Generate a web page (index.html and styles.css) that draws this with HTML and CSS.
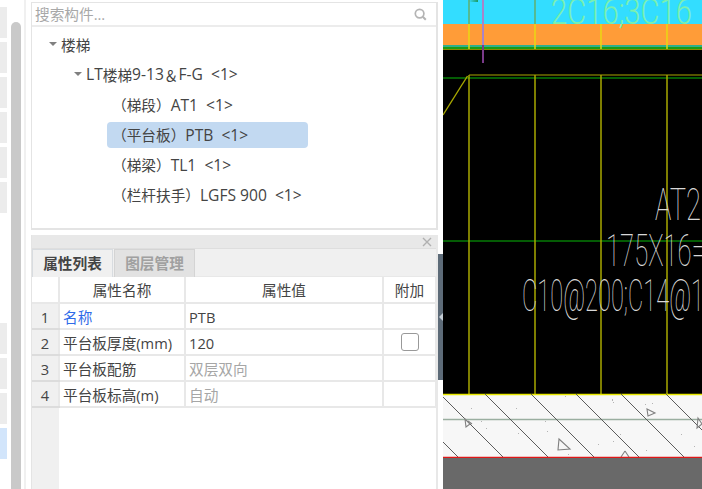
FILE: index.html
```html
<!DOCTYPE html>
<html lang="zh">
<head>
<meta charset="utf-8">
<title>楼梯</title>
<link rel="stylesheet" href="styles.css">
</head>
<body>
<div class="app">
  <aside class="rail">
    <div class="rail-items">
      <div class="rail-group">
        <i></i><i></i><i></i><i></i><i></i><i></i>
      </div>
      <div class="rail-group rail-group-low">
        <i></i><i></i><i></i><i class="on"></i>
      </div>
    </div>
    <div class="rail-scroll"></div>
    <div class="rail-line"></div>
  </aside>

  <main class="side">
    <section class="tree-panel">
      <div class="search">
        <span class="search-text">搜索构件...</span>
        <svg class="search-icon" width="13" height="13" viewBox="0 0 13 13"><circle cx="5.6" cy="5.6" r="4.3" fill="none" stroke="#b4b4b4" stroke-width="1.7"/><path d="M8.8 8.8 11.8 11.8" stroke="#b4b4b4" stroke-width="2"/></svg>
      </div>
      <ul class="tree">
        <li class="node lv0"><span class="caret"></span>楼梯</li>
        <li class="node lv1"><span class="caret"></span><span class="lat">LT</span>楼梯<span class="lat">9-13</span>＆<span class="lat">F-G  &lt;1&gt;</span></li>
        <li class="node lv2"><span class="pill">（梯段）<span class="lat">AT1  &lt;1&gt;</span></span></li>
        <li class="node lv2"><span class="pill selected">（平台板）<span class="lat">PTB  &lt;1&gt;</span></span></li>
        <li class="node lv2"><span class="pill">（梯梁）<span class="lat">TL1  &lt;1&gt;</span></span></li>
        <li class="node lv2"><span class="pill">（栏杆扶手）<span class="lat">LGFS 900  &lt;1&gt;</span></span></li>
      </ul>
    </section>

    <section class="prop-panel">
      <div class="title-bar">
        <svg width="10" height="10" viewBox="0 0 10 10"><path d="M1 1 9 9M9 1 1 9" stroke="#b0b0b0" stroke-width="1.4"/></svg>
      </div>
      <div class="tabs">
        <div class="tab active">属性列表</div>
        <div class="tab">图层管理</div>
      </div>
      <table class="props">
        <colgroup><col class="c-n"><col class="c-name"><col class="c-val"><col class="c-add"></colgroup>
        <thead>
          <tr><th></th><th>属性名称</th><th>属性值</th><th>附加</th></tr>
        </thead>
        <tbody>
          <tr><td class="num">1</td><td class="link">名称</td><td>PTB</td><td></td></tr>
          <tr><td class="num">2</td><td>平台板厚度(mm)</td><td>120</td><td class="chk"><span class="box"></span></td></tr>
          <tr><td class="num">3</td><td>平台板配筋</td><td class="muted">双层双向</td><td></td></tr>
          <tr><td class="num">4</td><td>平台板标高(m)</td><td class="muted">自动</td><td></td></tr>
        </tbody>
      </table>
      <div class="gutter-fill"></div>
    </section>
  </main>

  <div class="splitter"><div class="handle"><span class="arrow"></span></div></div>

  <div class="cad">
    <svg width="259" height="489" viewBox="443 0 259 489">
      <rect x="443" y="0" width="259" height="489" fill="#000"/>
      <rect x="443" y="0" width="259" height="24" fill="#33ddff"/>
      <rect x="443" y="24" width="259" height="21" fill="#ff9c38"/>
      <rect x="443" y="45" width="259" height="2" fill="#2fb08c"/>
      <rect x="443" y="47" width="259" height="2" fill="#1d9a12"/>
      <rect x="443" y="49" width="259" height="1" fill="#8a8a00"/>
      <text class="cad-text top" x="551" y="24" textLength="141" lengthAdjust="spacingAndGlyphs">2C16;3C16</text>
      <g stroke="#e8dc10" stroke-width="1.4">
        <path d="M469 24V49M535 24V49M601 24V49M667 24V49"/>
      </g>
      <g stroke="#6fa040" stroke-width="1.4" opacity=".8">
        <path d="M469 0V24M535 0V24"/>
      </g>
      <path d="M469 1 478 0V2Z" fill="#1f9a60"/>
      <path d="M483 0V45" stroke="#a884c8" stroke-width="2"/>
      <path d="M483 45V63" stroke="#7a3a8a" stroke-width="2"/>

      <path d="M443 78H702M443 241H702" stroke="#08b808" stroke-width="1.2"/>
      <path d="M469 75H702" stroke="#a8a800" stroke-width="1.2"/>
      <path d="M443 115 467.500 76" stroke="#a8a800" stroke-width="1.4"/>
      <path d="M469 75V394M535 75V394M601 75V394M667 75V394" stroke="#a8a800" stroke-width="1.5"/>

      <text class="cad-text" x="655" y="220" textLength="46" lengthAdjust="spacingAndGlyphs">AT2</text>
      <text class="cad-text" x="606" y="266" textLength="100" lengthAdjust="spacingAndGlyphs">175X16=</text>
      <text class="cad-text" x="522" y="311" textLength="182" lengthAdjust="spacingAndGlyphs">C10@200;C14@1</text>

      <rect x="443" y="394" width="259" height="63" fill="#f7f7f7"/>
      <path d="M443 394.500H702" stroke="#e8e800" stroke-width="1.4"/>
      <path d="M443 419.500H702" stroke="#9aaea0" stroke-width="1.6"/>
      <g stroke="#5c5c5c" stroke-width="1" fill="none">
        <path d="M395 394 458 457M440 394 503 457M485 394 548 457M531 394 594 457M576 394 639 457M621 394 684 457M666 394 729 457"/>
      </g>
      <g stroke="#808080" stroke-width="1.1" fill="none">
        <path d="M559 439 570 449 558 450Z"/>
        <path d="M647 409 655 413 648 416Z"/>
        <path d="M625 451 621 457M625 451 629 457"/>
        <path d="M698 418 702 424 697 428Z"/>
        <path d="M465 419 470 424 466 427Z"/>
        <path d="M468 421 472 424"/>
      </g>
      <g fill="#b4b4b4">
        <rect x="471" y="408" width="1" height="1"/><rect x="481" y="421" width="1" height="1"/><rect x="486" y="428" width="1" height="1"/>
        <rect x="516" y="408" width="1" height="1"/><rect x="518" y="433" width="1" height="1"/><rect x="545" y="421" width="1" height="1"/>
        <rect x="547" y="431" width="1" height="1"/><rect x="568" y="454" width="1" height="1"/><rect x="565" y="396" width="1" height="1"/>
        <rect x="612" y="399" width="1" height="2"/><rect x="613" y="402" width="1" height="1"/><rect x="645" y="404" width="1" height="1"/>
        <rect x="652" y="403" width="1" height="1"/><rect x="598" y="444" width="1" height="1"/><rect x="613" y="441" width="1" height="1"/>
        <rect x="620" y="434" width="1" height="1"/><rect x="646" y="450" width="1" height="1"/><rect x="694" y="446" width="1" height="1"/>
        <rect x="681" y="434" width="1" height="1"/>
      </g>
      <path d="M443 457.500H702" stroke="#e01818" stroke-width="1.4"/>
      <rect x="443" y="458" width="259" height="31" fill="#696969"/>
    </svg>
  </div>
</div>
</body>
</html>
```
FILE: styles.css
```css
* { box-sizing: border-box; }
html, body { margin: 0; padding: 0; height: 100%; }
body {
  background: #fff;
  font-family: "Open Sans", "Noto Sans CJK SC", sans-serif;
  font-size: 14.67px;
  color: #444;
  overflow: hidden;
}
.app { display: flex; width: 702px; height: 489px; }

/* left rail */
.rail { width: 31px; flex: none; display: flex; background: #fff; }
.rail-items { width: 7px; flex: none; display: flex; flex-direction: column; padding-top: 7px; }
.rail-group { display: flex; flex-direction: column; gap: 4px; }
.rail-group i { display: block; height: 31px; background: #ececec; }
.rail-group i.on { background: #d2e5fb; }
.rail-group-low { margin-top: 110px; }
.rail-scroll {
  width: 10px; margin: 22px 0 0 4px;
  background: #c9c9c9;
  border-radius: 5px 5px 0 0;
}
.rail-line { width: 2px; margin-left: 3px; background: #f0f0f0; }

/* main column */
.side { width: 407px; flex: none; display: flex; flex-direction: column; }
.tree-panel {
  height: 228px; margin-top: 2px;
  border: 1px solid #e4e4e4; border-width: 1px 2px 2px 1px;
  display: flex; flex-direction: column;
}
.search {
  height: 24px; flex: none;
  display: flex; align-items: center; justify-content: space-between;
  padding: 0 9px 0 3px;
  border-bottom: 2px solid #ececec;
}
.search-text { color: #a8a8a8; line-height: 22px; }
.search-icon { display: block; }
.tree { list-style: none; margin: 0; padding: 3px 0 0; }
.node { height: 30px; display: flex; align-items: center; white-space: pre; }
.lv0 { padding: 0 0 2px 17px; }
.lv1 { padding: 0 0 2px 42px; }
.lv2 { padding-left: 75px; }
.lat { font-size: 15.6px; }
.caret {
  width: 0; height: 0; flex: none; margin-right: 4px;
  border-left: 4px solid transparent; border-right: 4px solid transparent;
  border-top: 4px solid #808080;
}
.pill { height: 26px; line-height: 26px; display: block; padding: 0 4px 0 5px; border-radius: 4px; }
.pill.selected { background: #c2d9f1; width: 201px; }

/* properties */
.prop-panel {
  margin-top: 5px; flex: 1; min-height: 0;
  display: flex; flex-direction: column;
  border-right: 2px solid #e8e8e8; border-left: 1px solid #e4e4e4;
}
.title-bar {
  height: 14px; flex: none; background: #e8e8e8;
  border-bottom: 1px solid #dedede;
  display: flex; align-items: center; justify-content: flex-end; padding-right: 4px;
}
.tabs { height: 28px; flex: none; display: flex; background: #f0f0f0; border-bottom: 1px solid #e8e8e8; }
.tab {
  width: 81px; height: 28px; line-height: 27px; text-align: center;
  font-weight: 700; color: #a0a0a0; background: #e2e2e2;
  border: 1px solid #d4d4d4; border-width: 1px 1px 0 1px; margin-left: 1px;
}
.tab.active { color: #444; background: #f0f0f0; margin-left: 0; border-color: #d8dce0; }
.props { border-collapse: collapse; table-layout: fixed; width: 404px; flex: none; }
.c-n { width: 27px; } .c-name { width: 126px; } .c-val { width: 198px; } .c-add { width: 53px; }
.props th, .props td {
  height: 26px; padding: 1px 3px 0; border: 2px solid #e8e8e8; border-left-width: 2px;
  white-space: nowrap; overflow: hidden; font-weight: 400; line-height: 22px;
}
.props tr > :first-child { border-left: 0; }
.props th { text-align: center; }
.props thead th { border-top: 0; }
.num { background: #f0f0f0; text-align: center; border-bottom-color: #dcdcdc !important; }
.link { color: #2f6be8; }
.muted { color: #a6a6a6; }
.chk { text-align: center; padding: 0 !important; }
.box {
  display: block; width: 18px; height: 18px; margin: 0 auto;
  border: 1.5px solid #999; border-radius: 3px; background: #fff;
}
.gutter-fill { width: 27px; flex: 1; background: #f0f0f0; }

/* splitter */
.splitter { width: 5px; flex: none; background: #fff; padding-top: 254px; }
.handle {
  height: 126px; background: #5d6b78;
  display: flex; align-items: center; justify-content: center;
}
.arrow {
  width: 0; height: 0;
  border-top: 4px solid transparent; border-bottom: 4px solid transparent;
  border-right: 4px solid #c4ccd4;
}

/* CAD canvas */
.cad { width: 259px; flex: none; overflow: hidden; }
.cad svg { display: block; }
.cad-text { font-family: Roboto, "Liberation Sans", sans-serif; font-weight: 100; font-size: 44px; fill: #d8d8d8; }
.cad-text.top { fill: #7af0b0; font-size: 36px; font-weight: 300; }
```
